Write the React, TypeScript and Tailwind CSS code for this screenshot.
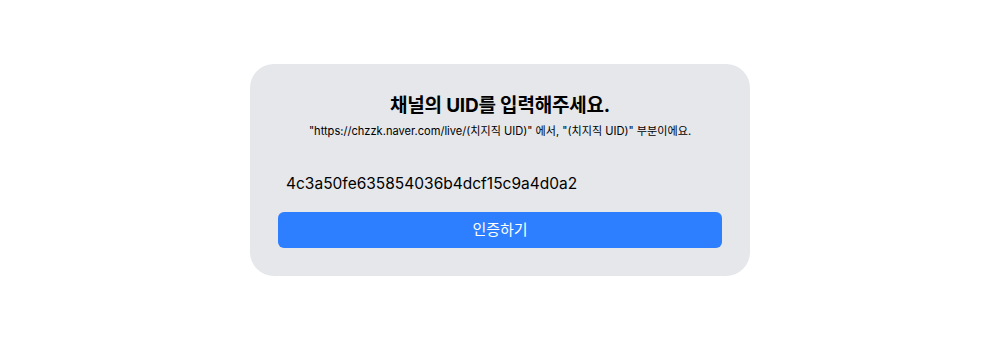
import { useState } from 'react';

export default function App() {
  const [uid, setUid] = useState('4c3a50fe635854036b4dcf15c9a4d0a2');

  return (
    <div
      className="flex h-[340px] w-full items-center justify-center bg-white"
      style={{ fontFamily: 'Inter, "Noto Sans CJK KR", sans-serif' }}
    >
      <div className="flex w-[500px] flex-col rounded-3xl bg-gray-200 p-7">
        <h1 className="text-center text-[19px] font-bold leading-7 tracking-[-0.01em] text-black">
          채널의 UID를 입력해주세요.
        </h1>
        <p className="mt-[3px] text-center text-[11.1px] leading-4 text-black">
          "https://chzzk.naver.com/live/(치지직 UID)" 에서, "(치지직 UID)" 부분이에요.
        </p>
        <input
          type="text"
          value={uid}
          onChange={(e) => setUid(e.target.value)}
          className="mt-6 h-10 w-full bg-transparent px-2 text-[15.5px] text-black outline-none"
        />
        <button className="mt-[9px] h-9 w-full rounded-md bg-[#2d7fff] text-[15px] text-white">
          인증하기
        </button>
      </div>
    </div>
  );
}
